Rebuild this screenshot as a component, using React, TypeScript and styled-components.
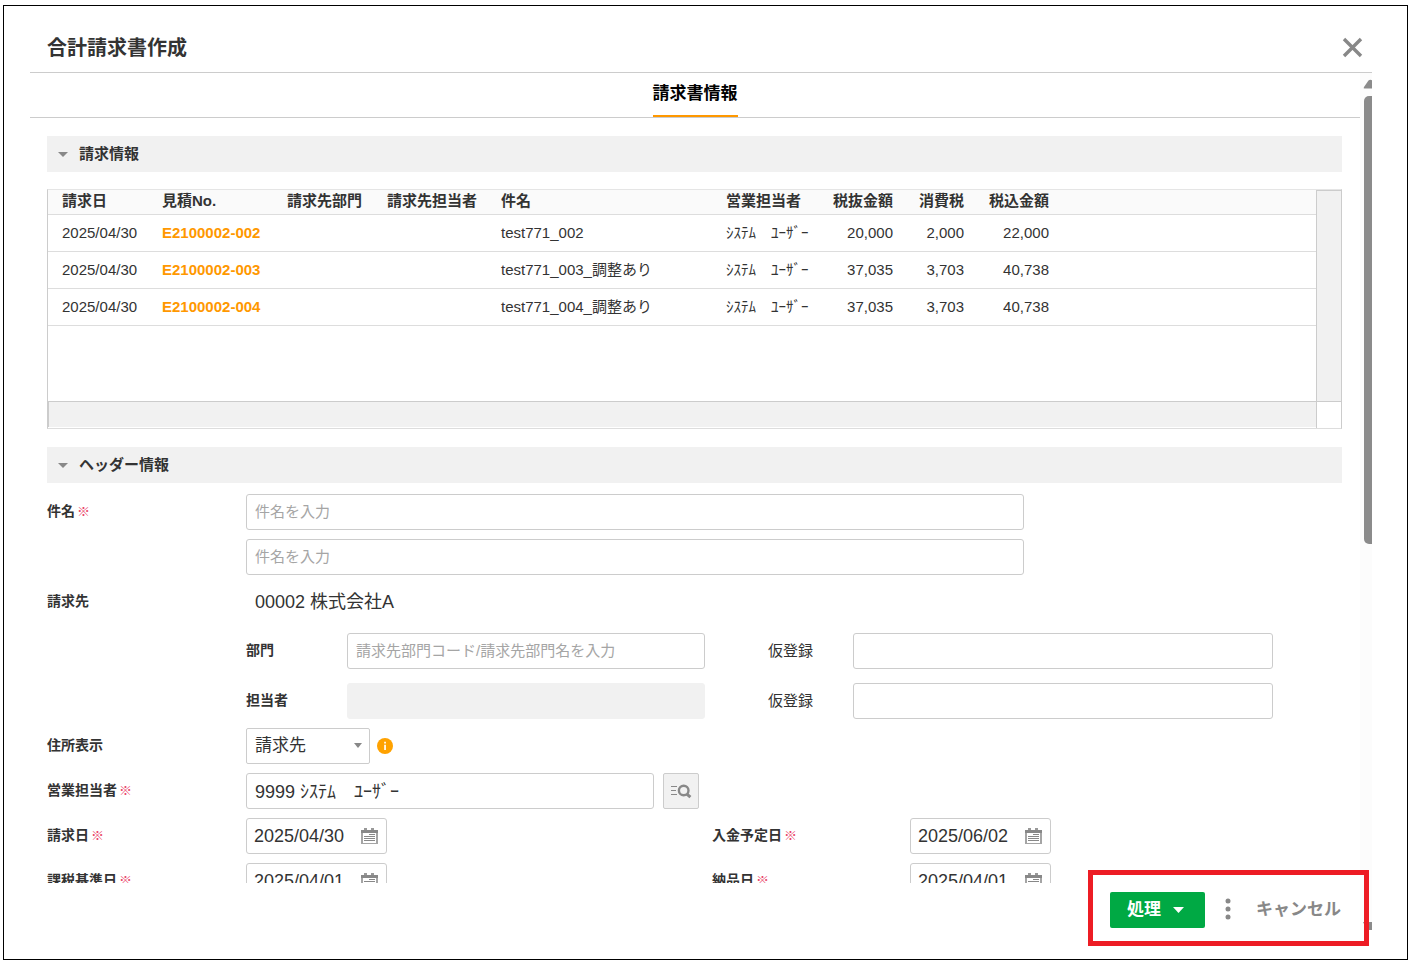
import React from "react";
import styled, { createGlobalStyle } from "styled-components";

const GlobalStyle = createGlobalStyle`
  *, *::before, *::after { box-sizing: border-box; }
  body {
    margin: 0;
    background: #fff;
    color: #333;
    font-family: "Liberation Sans", "Noto Sans CJK JP", sans-serif;
    font-size: 15px;
    line-height: 22px;
  }
  button, input, select { font-family: inherit; color: inherit; margin: 0; }
`;

const Page = styled.div`
  height: 100vh;
  padding: 5px 5px 2px 3px;
`;

const Dialog = styled.main`
  position: relative;
  display: flex;
  flex-direction: column;
  height: 100%;
  padding: 0 35px 0 26px;
  border: 1px solid #000;
`;

const TitleBar = styled.header`
  display: flex;
  flex: none;
  align-items: center;
  justify-content: space-between;
  height: 67px;
  padding: 16px 9px 0 17px;
  border-bottom: 1px solid #ccc;
`;

const Title = styled.h1`
  margin: 0;
  padding-top: 2px;
  font-size: 20px;
  line-height: 30px;
  font-weight: bold;
`;

const IconButton = styled.button`
  display: flex;
  flex: none;
  padding: 0;
  border: 0;
  background: none;
  cursor: pointer;
`;

const Main = styled.div`
  display: flex;
  flex: 1;
  min-height: 0;
`;

const Column = styled.div`
  display: flex;
  flex: 1;
  flex-direction: column;
  min-width: 0;
`;

const Tabs = styled.nav`
  display: flex;
  flex: none;
  justify-content: center;
  height: 45px;
  border-bottom: 1px solid #ccc;
`;

const Tab = styled.button`
  padding: 0;
  border: 0;
  border-bottom: 2px solid #ff9800;
  background: none;
  color: #000;
  font-size: 17px;
  line-height: 24px;
  font-weight: bold;
`;

const Content = styled.div`
  flex: 1;
  min-height: 0;
  padding: 18px 18px 0 17px;
  overflow-y: auto;
  scrollbar-width: none;
`;

const SectionBar = styled.h2`
  display: flex;
  align-items: center;
  gap: 11px;
  height: 36px;
  margin: 0;
  padding: 0 11px;
  background: #f1f1f1;
  font-size: 15px;
  line-height: 22px;
  font-weight: bold;
`;

const Grid = styled.div`
  display: grid;
  grid-template-columns: minmax(0, 1fr) 25px;
  grid-template-rows: 211px 27px;
  margin: 17px 0 18px;
  border: 1px solid #ccc;
  border-top-color: #e5e5e5;
  border-bottom-color: #ddd;
`;

const GridBody = styled.div`
  overflow: hidden;
`;

const VerticalTrack = styled.div`
  border-top: 1px solid #ccc;
  border-left: 1px solid #ccc;
  background: #f1f1f1;
`;

const HorizontalTrack = styled.div`
  margin-bottom: 1px;
  border: 1px solid #ccc;
  border-width: 1px 0 0 1px;
  background: #f1f1f1;
`;

const TrackCorner = styled.div`
  border: 1px solid #ccc;
  border-width: 1px 0 0 1px;
`;

const Table = styled.table`
  width: 100%;
  table-layout: fixed;
  border-collapse: separate;
  border-spacing: 0;
`;

const Col = styled.col<{ $w?: number }>`
  width: ${(p) => (p.$w ? `${p.$w}px` : "auto")};
`;

const HeadCell = styled.th<{ $right?: boolean }>`
  height: 25px;
  padding: ${(p) => (p.$right ? "0 14px 2px 0" : "0 0 2px 14px")};
  border-bottom: 1px solid #ddd;
  background: #fafafa;
  text-align: ${(p) => (p.$right ? "right" : "left")};
  white-space: nowrap;
`;

const Cell = styled.td<{ $right?: boolean }>`
  height: 37px;
  padding: ${(p) => (p.$right ? "0 14px 0 0" : "0 0 0 14px")};
  border-bottom: 1px solid #ddd;
  text-align: ${(p) => (p.$right ? "right" : "left")};
  white-space: nowrap;
`;

const QuoteLink = styled.a`
  color: #ff9800;
  font-weight: bold;
  text-decoration: none;
`;

const Form = styled.form`
  display: flex;
  flex-direction: column;
  gap: 9px;
  padding: 11px 0;
`;

const FormRow = styled.div`
  display: grid;
  grid-template-columns: 199px minmax(0, 1fr);
`;

const DateRow = styled.div`
  display: grid;
  grid-template-columns: 199px minmax(0, 466fr) 198px minmax(0, 432fr);
`;

const Label = styled.label`
  height: 36px;
  font-size: 14px;
  line-height: 34px;
  font-weight: bold;
  white-space: nowrap;
`;

const SubLabel = styled.label`
  padding-left: 63px;
  line-height: 36px;
`;

const Required = styled.span`
  margin-left: 2px;
  color: #ea4668;
  font-size: 13px;
  font-weight: normal;
`;

const Stack = styled.div`
  display: flex;
  flex-direction: column;
  gap: 9px;
  width: 71%;
`;

const TextInput = styled.input`
  display: block;
  width: 100%;
  height: 36px;
  padding: 0 8px 2px;
  border: 1px solid #ccc;
  border-radius: 3px;
  background: #fff;
  font-size: 18px;
  &::placeholder { color: #a5a5a5; font-size: 15px; opacity: 1; }
  &:disabled { border-color: #f1f1f1; background: #f1f1f1; }
`;

const Customer = styled.div`
  padding-left: 9px;
  font-size: 18px;
  line-height: 36px;
`;

const CustomerFields = styled.div`
  display: grid;
  grid-template-columns: 101px minmax(0, 358fr) 148px minmax(0, 420fr);
  row-gap: 14px;
  padding: 13px 69px 0 0;
`;

const Inline = styled.div`
  display: flex;
  align-items: center;
  gap: 7px;
`;

const SelectBox = styled.div`
  position: relative;
  width: 124px;
  svg { position: absolute; top: 15px; right: 8px; pointer-events: none; }
`;

const Select = styled.select`
  display: block;
  width: 100%;
  height: 36px;
  padding: 0 8px 2px;
  border: 1px solid #ccc;
  border-radius: 2px;
  appearance: none;
  background: #fff;
  font-size: 17px;
`;

const SearchGroup = styled.div`
  display: grid;
  grid-template-columns: minmax(0, 408fr) 36px minmax(0, 634fr);
  column-gap: 9px;
`;

const SearchButton = styled.button`
  display: flex;
  align-items: center;
  justify-content: center;
  width: 36px;
  height: 36px;
  padding: 0;
  border: 1px solid #ccc;
  border-radius: 2px;
  background: #f1f1f1;
`;

const DateBox = styled.div`
  display: flex;
  align-items: center;
  width: 141px;
  height: 36px;
  padding: 0 8px 0 7px;
  border: 1px solid #ccc;
  border-radius: 3px;
`;

const DateInput = styled.input`
  flex: 1;
  min-width: 0;
  padding: 0;
  border: 0;
  background: none;
  font-size: 18px;
`;

const Footer = styled.footer`
  display: flex;
  flex: none;
  align-items: flex-start;
  justify-content: flex-end;
  height: 76px;
  padding: 9px 19px 0 0;
`;

const ProcessButton = styled.button`
  display: flex;
  align-items: center;
  gap: 12px;
  height: 36px;
  padding: 0 21px 0 17px;
  border: 0;
  border-radius: 2px;
  background: #00a944;
  color: #fff;
  font-size: 17px;
  font-weight: bold;
`;

const ButtonText = styled.span`
  padding-bottom: 5px;
`;

const MoreButton = styled(IconButton)`
  align-items: center;
  justify-content: center;
  width: 46px;
  height: 36px;
  padding-bottom: 2px;
`;

const CancelButton = styled.button`
  height: 36px;
  padding: 0 0 5px 5px;
  border: 0;
  background: none;
  color: #888;
  font-size: 17px;
  font-weight: bold;
`;

const Scrollbar = styled.div`
  display: flex;
  flex: none;
  flex-direction: column;
  align-items: flex-end;
  width: 12px;
  margin-bottom: 29px;
  padding-top: 6px;
  background: #fcfcfc;
  svg { display: block; flex: none; }
`;

const Thumb = styled.div`
  flex: 448;
  width: 8px;
  margin-top: 7px;
  border-radius: 5px 0 0 5px;
  background: #8b8b8b;
`;

const TrackRest = styled.div`
  flex: 378;
`;

const Highlight = styled.div`
  position: absolute;
  right: 38px;
  bottom: 13px;
  width: 281px;
  height: 76px;
  border: 5px solid #ed1c24;
  pointer-events: none;
`;

const Caret = ({ w = 10, h = 5, color = "#888" }: { w?: number; h?: number; color?: string }) => (
  <svg width={w} height={h} viewBox="0 0 10 5" preserveAspectRatio="none" aria-hidden="true">
    <path d="M0 0H10L5 5Z" fill={color} />
  </svg>
);

const CloseIcon = () => (
  <svg width="21" height="21" viewBox="0 0 21 21" aria-hidden="true">
    <path d="M2 2L19 19M19 2L2 19" stroke="#888" strokeWidth="3.4" />
  </svg>
);

const CalendarIcon = () => (
  <svg width="17" height="17" viewBox="0 0 17 17" aria-hidden="true">
    <path d="M3 0h3v3H3zM10 0h3v3h-3z" fill="#999" />
    <path d="M0 2h17v3H0z" fill="#888" />
    <path d="M0 5h2v11H0zM15 5h2v11h-2zM0 15h17v1H0z" fill="#a5a5a5" />
    <path d="M8 6h6v1H8zM3 8h11v1H3zM3 10h11v1H3zM3 12h11v1H3z" fill="#888" />
  </svg>
);

const SearchIcon = () => (
  <svg width="22" height="16" viewBox="0 0 22 16" aria-hidden="true">
    <path d="M1 3.5h6M1 7.5h5M1 11.5h6" stroke="#888" strokeWidth="1" />
    <circle cx="13.7" cy="7.5" r="4.8" fill="none" stroke="#888" strokeWidth="2.4" />
    <path d="M16.6 10.8L20.4 14.2" stroke="#888" strokeWidth="3" />
  </svg>
);

const InfoIcon = () => (
  <svg width="16" height="16" viewBox="0 0 16 16" role="img" aria-label="説明">
    <circle cx="8" cy="8" r="8" fill="#ffa200" />
    <path d="M7.2 3.8h1.7v1.7H7.2zM7.2 6.7h1.7v5.2H7.2z" fill="#fff" />
  </svg>
);

const DotsIcon = () => (
  <svg width="6" height="22" viewBox="0 0 6 22" aria-hidden="true">
    {[3, 11, 19].map((y) => (
      <circle key={y} cx="3" cy={y} r="2.5" fill="#888" />
    ))}
  </svg>
);

const columns = [
  { name: "請求日", w: 100 },
  { name: "見積No.", w: 125 },
  { name: "請求先部門", w: 100 },
  { name: "請求先担当者", w: 114 },
  { name: "件名", w: 225 },
  { name: "営業担当者", w: 107 },
  { name: "税抜金額", w: 88, right: true },
  { name: "消費税", w: 71, right: true },
  { name: "税込金額", w: 85, right: true },
];

const invoices = [
  { no: "E2100002-002", subject: "test771_002", net: "20,000", tax: "2,000", total: "22,000" },
  { no: "E2100002-003", subject: "test771_003_調整あり", net: "37,035", tax: "3,703", total: "40,738" },
  { no: "E2100002-004", subject: "test771_004_調整あり", net: "37,035", tax: "3,703", total: "40,738" },
];

const InvoiceTable = () => (
  <Table>
    <colgroup>
      {columns.map((c) => (
        <Col key={c.name} $w={c.w} />
      ))}
      <Col />
    </colgroup>
    <thead>
      <tr>
        {columns.map((c) => (
          <HeadCell key={c.name} $right={c.right}>{c.name}</HeadCell>
        ))}
        <HeadCell as="td" />
      </tr>
    </thead>
    <tbody>
      {invoices.map((r) => (
        <tr key={r.no}>
          <Cell>2025/04/30</Cell>
          <Cell><QuoteLink href="#">{r.no}</QuoteLink></Cell>
          <Cell />
          <Cell />
          <Cell>{r.subject}</Cell>
          <Cell>ｼｽﾃﾑ　ﾕｰｻﾞｰ</Cell>
          <Cell $right>{r.net}</Cell>
          <Cell $right>{r.tax}</Cell>
          <Cell $right>{r.total}</Cell>
          <Cell />
        </tr>
      ))}
    </tbody>
  </Table>
);

const DateField = ({ id, label, value }: { id: string; label: string; value: string }) => (
  <>
    <Label htmlFor={id}>{label}<Required>※</Required></Label>
    <DateBox>
      <DateInput id={id} defaultValue={value} />
      <IconButton type="button" aria-label="カレンダー"><CalendarIcon /></IconButton>
    </DateBox>
  </>
);

export default function App() {
  return (
    <Page>
      <GlobalStyle />
      <Dialog>
        <TitleBar>
          <Title>合計請求書作成</Title>
          <IconButton type="button" aria-label="閉じる"><CloseIcon /></IconButton>
        </TitleBar>
        <Main>
          <Column>
            <Tabs><Tab type="button">請求書情報</Tab></Tabs>
            <Content>
              <SectionBar><Caret />請求情報</SectionBar>
              <Grid>
                <GridBody><InvoiceTable /></GridBody>
                <VerticalTrack />
                <HorizontalTrack />
                <TrackCorner />
              </Grid>
              <SectionBar><Caret />ヘッダー情報</SectionBar>
              <Form>
                <FormRow>
                  <Label htmlFor="subject">件名<Required>※</Required></Label>
                  <Stack>
                    <TextInput id="subject" placeholder="件名を入力" />
                    <TextInput aria-label="件名 2行目" placeholder="件名を入力" />
                  </Stack>
                </FormRow>
                <FormRow>
                  <Label as="div">請求先</Label>
                  <div>
                    <Customer>00002 株式会社A</Customer>
                    <CustomerFields>
                      <Label htmlFor="dept">部門</Label>
                      <TextInput id="dept" placeholder="請求先部門コード/請求先部門名を入力" />
                      <SubLabel htmlFor="dept-temp">仮登録</SubLabel>
                      <TextInput id="dept-temp" />
                      <Label htmlFor="person">担当者</Label>
                      <TextInput id="person" disabled />
                      <SubLabel htmlFor="person-temp">仮登録</SubLabel>
                      <TextInput id="person-temp" />
                    </CustomerFields>
                  </div>
                </FormRow>
                <FormRow>
                  <Label htmlFor="address">住所表示</Label>
                  <Inline>
                    <SelectBox>
                      <Select id="address"><option>請求先</option></Select>
                      <Caret w={8} />
                    </SelectBox>
                    <InfoIcon />
                  </Inline>
                </FormRow>
                <FormRow>
                  <Label htmlFor="sales">営業担当者<Required>※</Required></Label>
                  <SearchGroup>
                    <TextInput id="sales" defaultValue="9999 ｼｽﾃﾑ　ﾕｰｻﾞｰ" />
                    <SearchButton type="button" aria-label="検索"><SearchIcon /></SearchButton>
                  </SearchGroup>
                </FormRow>
                <DateRow>
                  <DateField id="bill-date" label="請求日" value="2025/04/30" />
                  <DateField id="due-date" label="入金予定日" value="2025/06/02" />
                </DateRow>
                <DateRow>
                  <DateField id="tax-date" label="課税基準日" value="2025/04/01" />
                  <DateField id="delivery-date" label="納品日" value="2025/04/01" />
                </DateRow>
              </Form>
            </Content>
            <Footer>
              <ProcessButton type="button">
                <ButtonText>処理</ButtonText>
                <Caret w={11} h={6} color="#fff" />
              </ProcessButton>
              <MoreButton type="button" aria-label="その他"><DotsIcon /></MoreButton>
              <CancelButton type="button">キャンセル</CancelButton>
            </Footer>
          </Column>
          <Scrollbar>
            <svg width="9" height="10" viewBox="0 0 9 10" aria-hidden="true">
              <path d="M1.5 9.5Q0 9.5 1 8L5.5 1.6Q7 0 9 1.2V9.5Z" fill="#8b8b8b" />
            </svg>
            <Thumb />
            <TrackRest />
            <svg width="9" height="8" viewBox="0 0 9 8" aria-hidden="true">
              <path d="M0 0H9V8H4Z" fill="#8b8b8b" />
            </svg>
          </Scrollbar>
        </Main>
        <Highlight />
      </Dialog>
    </Page>
  );
}
